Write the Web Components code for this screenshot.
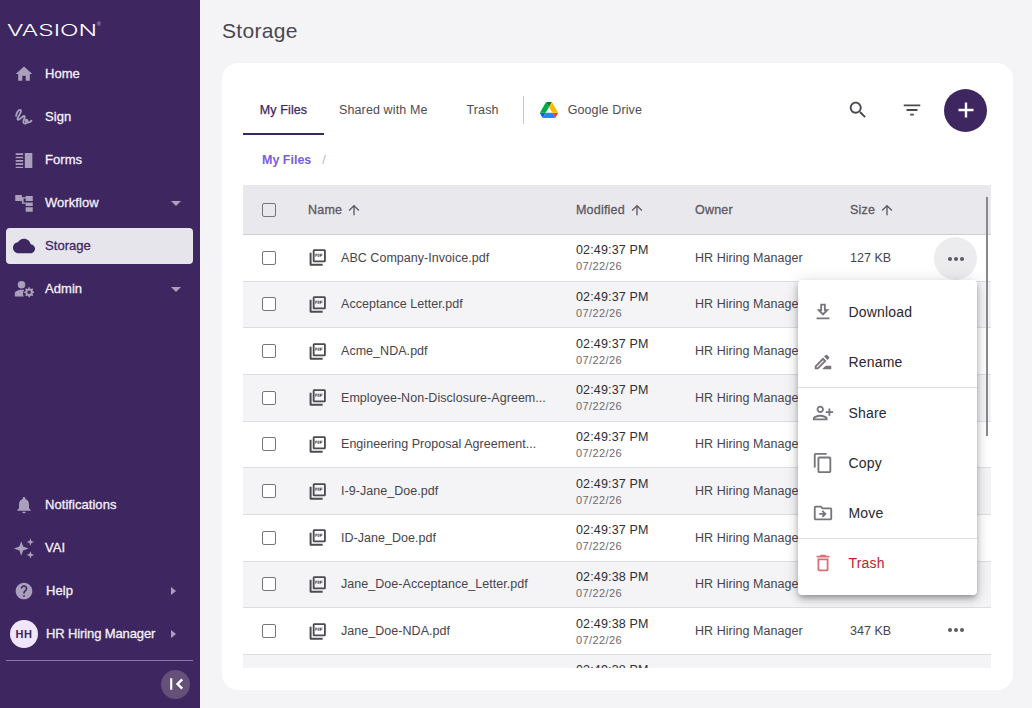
<!DOCTYPE html>
<html lang="en">
<head>
<meta charset="utf-8">
<title>Storage</title>
<style>
  html, body { margin: 0; height: 100%; }
  body { font-family: "Liberation Sans", Arial, sans-serif; overflow: hidden; }
</style>
</head>
<body>
<vn-app>
  <vn-sidebar slot="sidebar">
    <vn-nav-item slot="top" label="Home" icon="home"></vn-nav-item>
    <vn-nav-item slot="top" label="Sign" icon="sign"></vn-nav-item>
    <vn-nav-item slot="top" label="Forms" icon="forms"></vn-nav-item>
    <vn-nav-item slot="top" label="Workflow" icon="workflow" caret="down"></vn-nav-item>
    <vn-nav-item slot="top" label="Storage" icon="cloud" active></vn-nav-item>
    <vn-nav-item slot="top" label="Admin" icon="admin" caret="down"></vn-nav-item>
    <vn-nav-item slot="bottom" label="Notifications" icon="bell"></vn-nav-item>
    <vn-nav-item slot="bottom" label="VAI" icon="sparkle"></vn-nav-item>
    <vn-nav-item slot="bottom" label="Help" icon="help" caret="right" shifted></vn-nav-item>
    <vn-nav-item slot="bottom" label="HR Hiring Manager" avatar="HH" caret="right" shifted></vn-nav-item>
  </vn-sidebar>
  <vn-storage-page></vn-storage-page>
</vn-app>

<script>
// material style icons, 24x24 unless the entry says otherwise
const ICONS = {
  home: '<path d="M10 20v-6h4v6h5v-8h3L12 3 2 12h3v8z"/>',
  sign: '<path fill="none" stroke="currentColor" stroke-width="2.200" stroke-linecap="round" stroke-linejoin="round" d="M2.500 10.500C3 7 5.500 3 7.500 3.500c2 .6 0 4.500-2 7.500-1.500 2.300-1.800 4.300-.3 4.300 2 0 4.800-4.500 6.800-4.500 1.700 0 .6 2.800-.4 5-1 2.400-.2 4.500 1.900 4.200 2.500-.4 3.600-3.800 2-4.700-1.700-.8-2.700 2.700.2 3.300 1.800.3 3.800-.6 5.300-2.100"/>',
  forms: '<path d="M2 4h9v2H2zM2 8h9v2H2zM2 12h9v2H2zM2 16h9v2H2zM2 20h9v1.500H2zM13 3.500h9v18h-9z"/>',
  workflow: '<path d="M1.500 2.500h8v7h-8zM14 3.500h8.500v6H14zM14 11.500h8.500v4H14zM14 17h8.500v5.500H14zM9.500 5h4.500v1.500H11.500v5H14V13h-4.500z"/>',
  cloud: '<path d="M19.350 10.040C18.670 6.590 15.640 4 12 4 9.110 4 6.600 5.640 5.350 8.040 2.340 8.360 0 10.910 0 14c0 3.310 2.690 6 6 6h13c2.760 0 5-2.240 5-5 0-2.640-2.050-4.780-4.650-4.960z"/>',
  admin: '<circle cx="9" cy="7" r="4.500"/><path d="M1 21v-3.500C1 14.500 5.500 13 9.500 13c1 0 2 .1 2.800.3-1 1.300-1.500 2.800-1.500 4.300 0 1.200.3 2.400.9 3.400z"/><path fill-rule="evenodd" d="M18 12.500l1 .1.400 1.700 1.100.5 1.500-.9 1.200 1.200-.9 1.500.4 1.100 1.800.4v1.700l-1.800.4-.4 1.100.9 1.500-1.200 1.200-1.500-.9-1.100.5-.4 1.700h-1.700l-.4-1.700-1.100-.5-1.500.9-1.200-1.200.9-1.500-.4-1.100-1.800-.4v-1.700l1.800-.4.400-1.100-.9-1.500 1.200-1.200 1.500.9 1.100-.5.400-1.700zm0 4a2.300 2.300 0 1 0 0 4.600 2.300 2.300 0 0 0 0-4.600z" transform="translate(1 -2) scale(.95)"/>',
  bell: '<path d="M12 22c1.100 0 2-.9 2-2h-4c0 1.100.89 2 2 2zm6-6v-5c0-3.070-1.640-5.640-4.500-6.320V4c0-.83-.67-1.500-1.500-1.500s-1.500.67-1.500 1.500v.68C7.630 5.360 6 7.920 6 11v5l-2 2v1h16v-1l-2-2z"/>',
  sparkle: '<path d="M9 4.500l2 5.900 6 2.100-6 2.100-2 5.900-2-5.900-6-2.100 6-2.100zM19 1.500l1.100 2.900 2.900 1.100-2.900 1.100-1.100 2.900-1.100-2.900-2.900-1.100 2.900-1.100zM19 15.500l1.100 2.900 2.900 1.100-2.900 1.100-1.100 2.900-1.100-2.900-2.900-1.100 2.900-1.100z"/>',
  help: '<path d="M12 2C6.480 2 2 6.480 2 12s4.480 10 10 10 10-4.480 10-10S17.520 2 12 2zm1 17h-2v-2h2v2zm2.070-7.750l-.9.92C13.450 12.900 13 13.500 13 15h-2v-.5c0-1.100.45-2.100 1.170-2.830l1.240-1.260c.37-.36.59-.86.59-1.410 0-1.100-.9-2-2-2s-2 .9-2 2H8c0-2.210 1.790-4 4-4s4 1.790 4 4c0 .88-.36 1.680-.93 2.250z"/>',
  search: '<path d="M15.500 14h-.79l-.28-.27C15.410 12.590 16 11.110 16 9.500 16 5.910 13.090 3 9.500 3S3 5.910 3 9.500 5.910 16 9.500 16c1.610 0 3.090-.59 4.230-1.570l.27.28v.79l5 4.990L20.490 19l-4.990-5zm-6 0C7.010 14 5 11.990 5 9.500S7.010 5 9.500 5 14 7.010 14 9.500 11.990 14 9.500 14z"/>',
  filter: '<path d="M10 18h4v-2h-4v2zM3 6v2h18V6H3zm3 7h12v-2H6v2z"/>',
  plus: '<path d="M19.500 13.200h-6.300v6.300h-2.400v-6.300H4.500v-2.400h6.300V4.500h2.400v6.300h6.300z"/>',
  up: '<path d="M4 12l1.410 1.410L11 7.830V20h2V7.830l5.580 5.590L20 12l-8-8-8 8z"/>',
  pdf: '<path d="M20.500 1.500H8c-1.200 0-2 .8-2 2V16c0 1.200.8 2 2 2h12.500c1.200 0 2-.8 2-2V3.500c0-1.200-.8-2-2-2zm-.3 14.200H8.300V3.800h11.900zM4.500 6H2v14.500C2 21.700 2.800 22.500 4 22.500h14.500V20h-14z"/><path d="M9.300 7.200h2.200v2.400h-1.200v1.600h-1zm1 .8v.8h.4V8zM12.200 7.200h2.300v4h-2.300zm1 .8v2.300h.4V8zM15.200 7.200h3.200v.9h-2.200v.8h1.800v.8h-1.800v1.500h-1z"/>',
  download: '<path d="M19 9h-4V3H9v6H5l7 7 7-7zm-8 2V5h2v6h1.170L12 13.170 9.830 11H11zm-6 7h14v2H5z"/>',
  rename: '<path d="M15 16l-4 4h10v-4zM12.060 7.190L3 16.250V20h3.750l9.060-9.060-3.750-3.750zM5.920 18H5v-.92l7.060-7.060.92.92L5.920 18zM18.710 8.040c.39-.39.39-1.020 0-1.410l-2.340-2.340c-.2-.2-.45-.29-.71-.29s-.51.1-.7.29l-1.830 1.830 3.750 3.750 1.830-1.830z"/>',
  share: '<g transform="translate(24 0) scale(-1 1)"><path d="M15 12c2.210 0 4-1.790 4-4s-1.790-4-4-4-4 1.790-4 4 1.790 4 4 4zm0-6c1.100 0 2 .9 2 2s-.9 2-2 2-2-.9-2-2 .9-2 2-2zm0 8c-2.670 0-8 1.340-8 4v2h16v-2c0-2.660-5.330-4-8-4zm-6 4c.22-.72 3.310-2 6-2 2.700 0 5.800 1.290 6 2H9zm-3-3v-3h3v-2H6V7H4v3H1v2h3v3z"/></g>',
  copy: '<path d="M16 1H4c-1.100 0-2 .9-2 2v14h2V3h12V1zm3 4H8c-1.100 0-2 .9-2 2v14c0 1.100.9 2 2 2h11c1.100 0 2-.9 2-2V7c0-1.100-.9-2-2-2zm0 16H8V7h11v14z"/>',
  move: '<path d="M20 6h-8l-2-2H4c-1.100 0-2 .9-2 2v12c0 1.100.9 2 2 2h16c1.100 0 2-.9 2-2V8c0-1.100-.9-2-2-2zm0 12H4V6h5.170l2 2H20v10zm-8.010-9l-1.410 1.410L12.160 12H8v2h4.160l-1.590 1.590L11.990 17 16 13.010 11.990 9z"/>',
  trash: '<path d="M6 19c0 1.100.9 2 2 2h8c1.100 0 2-.9 2-2V7H6v12zM8 9h8v10H8V9zm7.500-5l-1-1h-5l-1 1H5v2h14V4z"/>',
  collapse: '<path d="M5 5h2.500v14H5zM18.500 5.500l2 2L15.800 12l4.700 4.500-2 2L11.800 12z"/>'
};

const svg = (name, size) =>
  `<svg width="${size}" height="${size}" viewBox="0 0 24 24" fill="currentColor" aria-hidden="true">${ICONS[name]}</svg>`;

class VnApp extends HTMLElement {
  constructor() {
    super();
    this.attachShadow({ mode: 'open' }).innerHTML = `
      <style>
        :host { display: flex; width: 100%; height: 708px; background: #f4f4f6; }
        ::slotted(vn-storage-page) { flex: 1; min-width: 0; }
      </style>
      <slot name="sidebar"></slot>
      <slot></slot>`;
  }
}

class VnSidebar extends HTMLElement {
  constructor() {
    super();
    this.attachShadow({ mode: 'open' }).innerHTML = `
      <style>
        :host {
          display: flex; flex-direction: column; width: 200px; height: 708px; flex: none;
          box-sizing: border-box; padding: 0 7px 0 6px; background: #3e2661; color: #fff;
        }
        .logo { height: 56px; flex: none; position: relative; }
        .mark {
          position: absolute; left: 1px; top: 21px; font-family: "Inter", sans-serif; font-size: 16.500px; line-height: 18px; font-weight: 300;
          transform: scaleX(1.48); transform-origin: left; white-space: nowrap; color: #fff;
        }
        .reg { position: absolute; left: 91px; top: 21px; font-size: 5px; line-height: 6px; color: #cfc7dc; }
        nav { display: flex; flex-direction: column; gap: 7px; }
        .bottom { margin-top: auto; }
        hr { border: 0; border-top: 1px solid #8b7aa3; margin: 8px 0 0; }
        .foot { height: 47px; display: flex; align-items: center; justify-content: flex-end; padding-right: 3px; }
        .collapse {
          width: 29px; height: 29px; border-radius: 50%; background: #655079; color: #fff;
          display: flex; align-items: center; justify-content: center; margin-top: -1px;
        }
      </style>
      <div class="logo"><span class="mark">VASION</span><span class="reg">®</span></div>
      <nav><slot name="top"></slot></nav>
      <nav class="bottom"><slot name="bottom"></slot></nav>
      <hr>
      <div class="foot"><div class="collapse">${svg('collapse', 20)}</div></div>`;
  }
}

class VnNavItem extends HTMLElement {
  constructor() {
    super();
    const label = this.getAttribute('label');
    const icon = this.getAttribute('icon');
    const avatar = this.getAttribute('avatar');
    const caret = this.getAttribute('caret');
    const lead = avatar ? `<span class="avatar">${avatar}</span>` : svg(icon, icon === 'cloud' || icon === 'sparkle' ? 22 : 20);
    const arrow = caret === 'down' ? '<span class="down"></span>' : caret === 'right' ? '<span class="right"></span>' : '';
    this.attachShadow({ mode: 'open' }).innerHTML = `
      <style>
        :host {
          display: flex; align-items: center; height: 36px; border-radius: 4px; position: relative;
          font-size: 13px; color: #f4f1f8; -webkit-text-stroke: .3px currentColor; letter-spacing: .05px;
        }
        :host([active]) { background: #e7e5ec; color: #3e2661; }
        :host([avatar]) { letter-spacing: -.12px; }
        .lead { width: 36px; flex: none; display: flex; justify-content: center; color: #aaa0bb; -webkit-text-stroke: 0; letter-spacing: 0; }
        :host([active]) .lead { color: #3e2661; }
        .label { flex: 1; white-space: nowrap; margin: -1px 0 0 3px; }
        :host([shifted]) .label { margin-left: 4px; }
        .avatar {
          width: 28px; height: 28px; border-radius: 50%; background: #efe6fb; color: #3e2661;
          font-size: 11px; font-weight: 700; letter-spacing: .6px; display: flex; align-items: center; justify-content: center;
        }
        .down { width: 0; height: 0; border: 5px solid transparent; border-top: 5px solid #aaa0bb; border-bottom: 0; margin-right: 12px; }
        .right { width: 0; height: 0; border: 4.500px solid transparent; border-left: 5px solid #aaa0bb; border-right: 0; margin-right: 17px; }
      </style>
      <span class="lead">${lead}</span>
      <span class="label">${label}</span>
      ${arrow}`;
  }
}

class VnTabs extends HTMLElement {
  constructor() {
    super();
    this.attachShadow({ mode: 'open' }).innerHTML = `
      <style>
        :host { display: flex; align-items: stretch; height: 72px; box-sizing: border-box; padding-top: 22px; font-size: 12.500px; color: #4e4b55; }
        .tab { display: flex; align-items: center; white-space: nowrap; letter-spacing: .12px; }
        .on { width: 81px; justify-content: center; color: #3e2661; -webkit-text-stroke: .25px currentColor; border-bottom: 2px solid #3e2661; box-sizing: border-box; padding-top: 2px; }
        .shared { margin-left: 15px; }
        .trash { margin-left: 39px; }
        .sep { width: 1px; height: 28px; background: #c9c7cf; margin: 11px 16px 0 24px; }
        .drive { gap: 10px; }
        .tools { margin-left: auto; display: flex; align-items: center; color: #4a4750; }
        .tools svg { display: block; }
        .filter { margin-left: 32px; }
        .add {
          width: 43px; height: 43px; border-radius: 50%; background: #3e2661; color: #fff;
          margin-left: 21px; margin-right: 4px; display: flex; align-items: center; justify-content: center;
        }
      </style>
      <div class="tab on">My Files</div>
      <div class="tab shared">Shared with Me</div>
      <div class="tab trash">Trash</div>
      <div class="sep"></div>
      <div class="tab drive">
        <svg width="18" height="16" viewBox="0 0 87.300 78" aria-hidden="true">
          <path d="m6.600 66.850 3.850 6.650c.8 1.400 1.950 2.500 3.300 3.300l13.750-23.800h-27.500c0 1.550.4 3.100 1.200 4.500z" fill="#0066da"/>
          <path d="m43.650 25-13.750-23.800c-1.350.8-2.500 1.900-3.300 3.300l-25.400 44a9.060 9.060 0 0 0 -1.200 4.500h27.500z" fill="#00ac47"/>
          <path d="m73.550 76.800c1.350-.8 2.500-1.900 3.300-3.300l1.600-2.750 7.650-13.250c.8-1.400 1.200-2.950 1.200-4.500h-27.502l5.852 11.500z" fill="#ea4335"/>
          <path d="m43.650 25 13.750-23.800c-1.350-.8-2.900-1.200-4.500-1.200h-18.500c-1.600 0-3.150.45-4.500 1.200z" fill="#00832d"/>
          <path d="m59.800 53h-32.300l-13.750 23.800c1.350.8 2.900 1.200 4.500 1.200h50.800c1.600 0 3.150-.45 4.500-1.200z" fill="#2684fc"/>
          <path d="m73.400 26.500-12.700-22c-.8-1.400-1.950-2.500-3.300-3.300l-13.750 23.800 16.150 28h27.450c0-1.550-.4-3.100-1.200-4.500z" fill="#ffba00"/>
        </svg>
        <span>Google Drive</span>
      </div>
      <div class="tools">
        ${svg('search', 22)}
        <span class="filter">${svg('filter', 22)}</span>
        <div class="add">${svg('plus', 24)}</div>
      </div>`;
  }
}

const GRID = 'display: grid; grid-template-columns: 65px 268px 119px 155px 1fr; align-items: center;';

class VnCheck extends HTMLElement {
  constructor() {
    super();
    this.attachShadow({ mode: 'open' }).innerHTML = `
      <style>
        :host { display: block; width: 14px; height: 14px; margin-left: 19px; border: 1.500px solid #77747c; border-radius: 2px; box-sizing: border-box; background: #fff; }
      </style>`;
  }
}

class VnFileHeader extends HTMLElement {
  constructor() {
    super();
    const arrow = svg('up', 16);
    this.attachShadow({ mode: 'open' }).innerHTML = `
      <style>
        :host { ${GRID} height: 50px; box-sizing: border-box; background: #e9e8ed; border-bottom: 1px solid #cfced3; font-size: 12.500px; color: #5c5962; -webkit-text-stroke: .3px currentColor; letter-spacing: .2px; }
        span { display: flex; align-items: center; gap: 4px; }
        svg { display: block; }
        vn-check { background: transparent; }
      </style>
      <vn-check></vn-check>
      <span>Name ${arrow}</span>
      <span>Modified ${arrow}</span>
      <span>Owner</span>
      <span>Size ${arrow}</span>`;
  }
}

class VnFileRow extends HTMLElement {
  constructor() {
    super();
    const get = (n) => this.getAttribute(n) || '';
    this.attachShadow({ mode: 'open' }).innerHTML = `
      <style>
        :host { ${GRID} height: 46.670px; box-sizing: border-box; background: #fff; border-bottom: 1px solid #dededf; font-size: 12.500px; color: #47444c; letter-spacing: .04px; }
        :host([alt]) { background: #f4f4f6; }
        .name { display: flex; align-items: center; gap: 14px; white-space: nowrap; }
        .name svg { display: block; color: #4d4a52; flex: none; }
        .time { line-height: 16px; white-space: nowrap; padding-top: 2px; }
        .time b { display: block; font-weight: 400; color: #2f2d33; letter-spacing: .15px; }
        .time small { display: block; font-size: 11px; color: #6c6971; letter-spacing: .4px; line-height: 17px; }
        .owner { white-space: nowrap; }
      </style>
      <vn-check></vn-check>
      <div class="name">${svg('pdf', 19)}<span>${get('name')}</span></div>
      <div class="time"><b>${get('time')}</b><small>07/22/26</small></div>
      <div class="owner">HR Hiring Manager</div>
      <div>${get('size')}</div>`;
  }
}

class VnContextMenu extends HTMLElement {
  constructor() {
    super();
    const item = (icon, label, cls = '') =>
      `<div class="item ${cls}"><span class="ic">${svg(icon, 22)}</span><span class="txt">${label}</span></div>`;
    this.attachShadow({ mode: 'open' }).innerHTML = `
      <style>
        :host {
          position: absolute; left: 576px; top: 217px; width: 179px; box-sizing: border-box; padding: 7px 0 8px;
          background: #fff; border-radius: 4px; z-index: 5; font-size: 14px; color: #29272f; letter-spacing: .18px;
          box-shadow: 0 3px 5px -1px rgba(0,0,0,.25), 0 5px 10px rgba(0,0,0,.16), 0 1px 16px rgba(0,0,0,.12);
        }
        .item { height: 50px; display: flex; align-items: center; padding-left: 14px; }
        .ic { width: 36.500px; display: flex; color: #77747c; }
        .ic svg { display: block; }
        .txt { margin-top: -1px; }
        hr { border: 0; border-top: 1px solid #dededf; margin: 0; }
        .danger { height: 48px; color: #c4202a; }
        .danger .ic { color: #dc6f75; }
      </style>
      ${item('download', 'Download')}
      ${item('rename', 'Rename')}
      <hr>
      ${item('share', 'Share')}
      ${item('copy', 'Copy')}
      ${item('move', 'Move')}
      <hr>
      ${item('trash', 'Trash', 'danger')}`;
  }
}

const FILES = [
  ['ABC Company-Invoice.pdf', '02:49:37 PM', '127 KB'],
  ['Acceptance Letter.pdf', '02:49:37 PM'],
  ['Acme_NDA.pdf', '02:49:37 PM'],
  ['Employee-Non-Disclosure-Agreem...', '02:49:37 PM'],
  ['Engineering Proposal Agreement...', '02:49:37 PM'],
  ['I-9-Jane_Doe.pdf', '02:49:37 PM'],
  ['ID-Jane_Doe.pdf', '02:49:37 PM'],
  ['Jane_Doe-Acceptance_Letter.pdf', '02:49:38 PM'],
  ['Jane_Doe-NDA.pdf', '02:49:38 PM', '347 KB']
];

class VnStoragePage extends HTMLElement {
  constructor() {
    super();
    const rows = FILES.map((f, i) =>
      `<vn-file-row name="${f[0]}" time="${f[1]}" size="${f[2] || ''}" ${i % 2 ? 'alt' : ''}></vn-file-row>`).join('');
    this.attachShadow({ mode: 'open' }).innerHTML = `
      <style>
        :host { display: flex; flex-direction: column; box-sizing: border-box; height: 708px; padding: 0 19px 18px 22px; color: #47444c; }
        h1 { margin: 0; height: 63px; flex: none; box-sizing: border-box; padding-top: 18px; font-size: 21px; line-height: 26px; font-weight: 400; color: #4a4750; letter-spacing: .3px; }
        .card { flex: 1; min-height: 0; position: relative; background: #fff; border-radius: 16px; padding: 0 22px 22px 21px; display: flex; flex-direction: column; }
        .crumbs { height: 50px; flex: none; box-sizing: border-box; padding: 0 0 0 19px; display: flex; align-items: center; gap: 11px; font-size: 12.500px; }
        .crumbs b { font-weight: 700; color: #7c5ce0; }
        .crumbs span { color: #b9b7bf; }
        .table { flex: 1; min-height: 0; overflow: hidden; position: relative; background: #f4f4f6; }
        .hit { position: absolute; left: 691px; top: 52px; width: 43px; height: 43px; border-radius: 50%; background: #ececee; display: flex; align-items: center; justify-content: center; gap: 2px; }
        .dots { position: absolute; display: flex; gap: 2px; align-items: center; justify-content: center; left: 691px; width: 43px; height: 4px; top: 443px; }
        i { width: 4px; height: 4px; border-radius: 50%; background: #5c5962; }
        .bar { position: absolute; left: 743px; top: 12px; width: 2px; height: 239px; background: #8a888e; }
      </style>
      <h1>Storage</h1>
      <div class="card">
        <vn-tabs></vn-tabs>
        <div class="crumbs"><b>My Files</b><span>/</span></div>
        <div class="table">
          <vn-file-header></vn-file-header>
          ${rows}
          <vn-file-row name="" time="02:49:38 PM" alt></vn-file-row>
          <div class="hit"><i></i><i></i><i></i></div>
          <div class="dots"><i></i><i></i><i></i></div>
          <div class="bar"></div>
        </div>
        <vn-context-menu></vn-context-menu>
      </div>`;
  }
}

// children first so shadow markup upgrades as it is parsed
customElements.define('vn-check', VnCheck);
customElements.define('vn-nav-item', VnNavItem);
customElements.define('vn-sidebar', VnSidebar);
customElements.define('vn-tabs', VnTabs);
customElements.define('vn-file-header', VnFileHeader);
customElements.define('vn-file-row', VnFileRow);
customElements.define('vn-context-menu', VnContextMenu);
customElements.define('vn-storage-page', VnStoragePage);
customElements.define('vn-app', VnApp);
</script>
</body>
</html>
